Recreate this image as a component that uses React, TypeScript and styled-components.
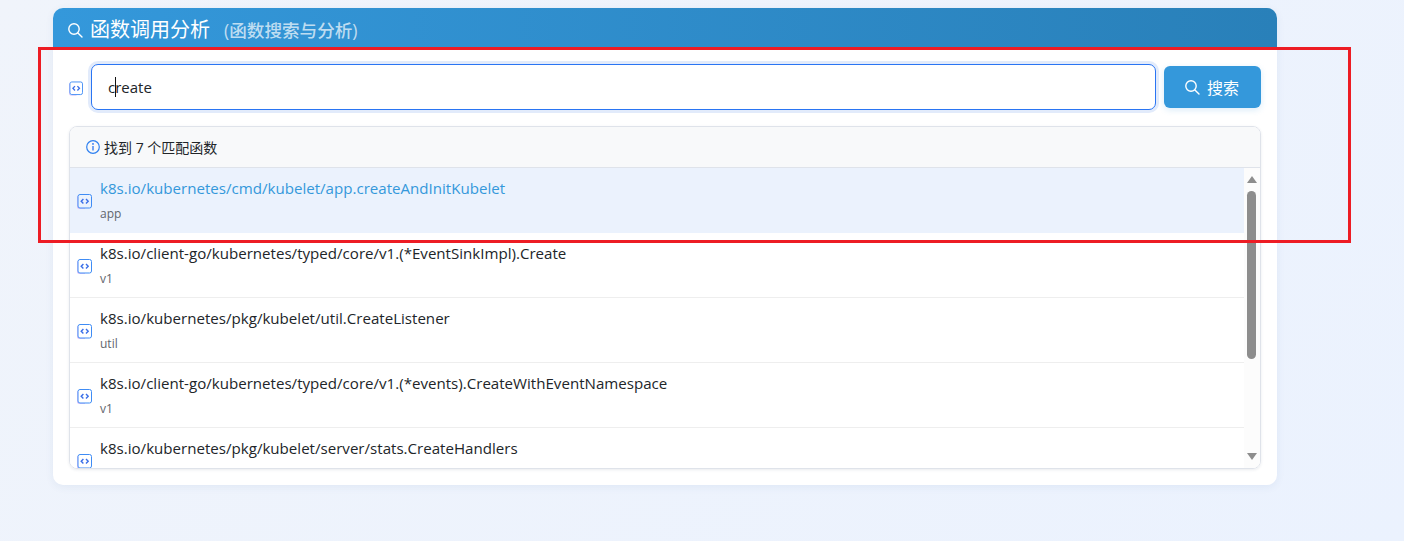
import React from 'react'
import { createGlobalStyle, styled } from 'styled-components'

const fontStack = '"Open Sans", "Noto Sans CJK SC", sans-serif'

const GlobalStyle = createGlobalStyle`
  html, body {
    margin: 0;
    padding: 0;
    height: 541px;
    overflow: hidden;
    background: #ebf2fd;
    font-family: ${fontStack};
  }
  * {
    box-sizing: border-box;
  }
`

const Page = styled.div`
  position: relative;
  width: 1404px;
  height: 541px;
  padding: 8px 127px 0 53px;
  background: linear-gradient(135deg, #f0f4fb 0%, #ebf2fe 100%);
`

const Card = styled.section`
  height: 477px;
  background: #fff;
  border-radius: 10px;
  box-shadow: 0 2px 8px rgba(40, 80, 140, 0.07);
  overflow: hidden;
`

const CardHeader = styled.header`
  height: 41px;
  display: flex;
  align-items: center;
  padding: 3px 14px 0;
  gap: 7px;
  color: #fff;
  background: linear-gradient(90deg, #3498db 0%, #2980b9 100%);
`

const CardTitle = styled.h1`
  margin: 0;
  font-size: 20px;
  font-weight: 400;
  line-height: 28px;
`

const CardSubtitle = styled.span`
  margin-left: 14px;
  font-size: 17.6px;
  font-weight: 500;
  color: rgba(255, 255, 255, 0.7);
`

const CardBody = styled.div`
  padding: 15px 16px 0;
`

const SearchRow = styled.div`
  display: flex;
  align-items: center;
  gap: 8px;
  margin-bottom: 16px;
`

const IconSlot = styled.span`
  flex: none;
  display: flex;
  padding-top: 2px;
`

const SearchIconBox = styled(IconSlot)`
  width: 14px;
`

const SearchInput = styled.div`
  flex: 1;
  height: 46px;
  display: flex;
  align-items: center;
  padding: 0 16px;
  font-size: 15px;
  color: #212529;
  background: #fff;
  border: 1px solid #2a75f3;
  border-radius: 7px;
  box-shadow: 0 0 0 3px #e2ebfb;
`

const Caret = styled.span`
  display: inline-block;
  width: 1px;
  height: 20px;
  margin: 0 -1px 0 0;
  background: #111;
`

const SearchButton = styled.button`
  width: 97px;
  height: 42px;
  display: flex;
  align-items: center;
  justify-content: center;
  gap: 7px;
  padding: 0 2px 0 0;
  font-family: inherit;
  font-size: 16px;
  color: #fff;
  background: #3498db;
  border: 0;
  border-radius: 6px;
  box-shadow: 0 2px 6px rgba(52, 152, 219, 0.18);
`

const Results = styled.div`
  height: 343px;
  display: flex;
  flex-direction: column;
  border: 1px solid #dfe3ea;
  border-radius: 8px;
  box-shadow: 0 1px 3px rgba(40, 60, 90, 0.1);
  overflow: hidden;
`

const ResultsHeader = styled.div`
  height: 41px;
  flex: none;
  display: flex;
  align-items: center;
  gap: 4px;
  padding: 0 16px;
  font-size: 14px;
  color: #212529;
  background: #f8f9fa;
  border-bottom: 1px solid #dfe3ea;
`

const ResultsBody = styled.div`
  flex: 1;
  min-height: 0;
  display: flex;
`

const ResultList = styled.ul`
  flex: 1;
  margin: 0;
  padding: 0;
  list-style: none;
  overflow: hidden;
`

const ResultItem = styled.li<{ $active?: boolean }>`
  height: 65px;
  display: flex;
  align-items: center;
  gap: 8px;
  padding: 0 8px 0 7px;
  background: ${p => (p.$active ? '#ebf2fd' : '#fff')};
  border-bottom: 1px solid ${p => (p.$active ? '#ebf2fd' : '#eeeeee')};
`

const ResultText = styled.div`
  min-width: 0;
  display: flex;
  flex-direction: column;
  gap: 7px;
  padding-bottom: 2px;
`

const ResultName = styled.div<{ $active?: boolean }>`
  font-size: 15.1px;
  line-height: 22px;
  color: ${p => (p.$active ? '#3498db' : '#212529')};
  white-space: nowrap;
`

const ResultPackage = styled.div`
  min-height: 16px;
  font-size: 12px;
  line-height: 16px;
  color: #5f666d;
`

const ScrollTrack = styled.div`
  width: 16px;
  flex: none;
  display: flex;
  flex-direction: column;
  align-items: center;
  padding-right: 1px;
  background: #fcfcfc;
`

const ArrowUp = styled.span`
  flex: none;
  margin: 8px 0 8px;
  border-left: 5px solid transparent;
  border-right: 5px solid transparent;
  border-bottom: 7px solid #8d8d8d;
`

const ScrollThumb = styled.span`
  width: 9px;
  height: 168px;
  flex: none;
  background: #8d8d8d;
  border-radius: 5px;
`

const ArrowDown = styled.span`
  flex: none;
  margin-top: auto;
  margin-bottom: 8px;
  border-left: 5px solid transparent;
  border-right: 5px solid transparent;
  border-top: 7px solid #8d8d8d;
`

const Annotation = styled.div`
  position: absolute;
  left: 38px;
  top: 47px;
  width: 1313px;
  height: 196px;
  border: 3px solid #ed1c24;
  pointer-events: none;
`

const SearchGlyph = ({ size }: { size: number }) => (
  <svg width={size} height={size} viewBox="0 0 16 16" fill="none" stroke="#fff" strokeWidth="1.4" strokeLinecap="round">
    <circle cx="7" cy="7" r="5.2" />
    <path d="M10.9 10.9 15 15" />
  </svg>
)

const CodeGlyph = () => (
  <svg width="15" height="15" viewBox="0 0 15 15" fill="none">
    <path d="M0.4 2v11q0 1.6 1.6 1.6h6" stroke="#d4b6f8" strokeWidth="0.8" />
    <rect x="1" y="0.5" width="13.5" height="13.5" rx="2" stroke="#3f8cf5" />
    <path d="M6.4 5 4.2 7.3l2.2 2.3M9 5l2.2 2.3L9 9.6" stroke="#3a6fe8" strokeWidth="1.4" />
  </svg>
)

const InfoGlyph = () => (
  <svg width="14" height="14" viewBox="0 0 14 14" fill="none">
    <circle cx="7" cy="7" r="6.3" stroke="#2f80f0" strokeWidth="1.2" />
    <path d="M7 6v4.4" stroke="#2a75f3" strokeWidth="1.3" />
    <circle cx="7" cy="3.9" r="0.9" fill="#2a75f3" />
  </svg>
)

const results = [
  { name: 'k8s.io/kubernetes/cmd/kubelet/app.createAndInitKubelet', pkg: 'app', active: true },
  { name: 'k8s.io/client-go/kubernetes/typed/core/v1.(*EventSinkImpl).Create', pkg: 'v1' },
  { name: 'k8s.io/kubernetes/pkg/kubelet/util.CreateListener', pkg: 'util' },
  { name: 'k8s.io/client-go/kubernetes/typed/core/v1.(*events).CreateWithEventNamespace', pkg: 'v1' },
  { name: 'k8s.io/kubernetes/pkg/kubelet/server/stats.CreateHandlers' },
]

export default function App () {
  return (
    <Page>
      <GlobalStyle />
      <Card>
        <CardHeader>
          <SearchGlyph size={16} />
          <CardTitle>函数调用分析<CardSubtitle>(函数搜索与分析)</CardSubtitle></CardTitle>
        </CardHeader>
        <CardBody>
          <SearchRow>
            <SearchIconBox><CodeGlyph /></SearchIconBox>
            <SearchInput>c<Caret />reate</SearchInput>
            <SearchButton><SearchGlyph size={16} />搜索</SearchButton>
          </SearchRow>
          <Results>
            <ResultsHeader><InfoGlyph />找到 7 个匹配函数</ResultsHeader>
            <ResultsBody>
              <ResultList>
                {results.map(r => (
                  <ResultItem key={r.name} $active={r.active}>
                    <IconSlot><CodeGlyph /></IconSlot>
                    <ResultText>
                      <ResultName $active={r.active}>{r.name}</ResultName>
                      <ResultPackage>{r.pkg}</ResultPackage>
                    </ResultText>
                  </ResultItem>
                ))}
              </ResultList>
              <ScrollTrack>
                <ArrowUp />
                <ScrollThumb />
                <ArrowDown />
              </ScrollTrack>
            </ResultsBody>
          </Results>
        </CardBody>
      </Card>
      <Annotation />
    </Page>
  )
}
